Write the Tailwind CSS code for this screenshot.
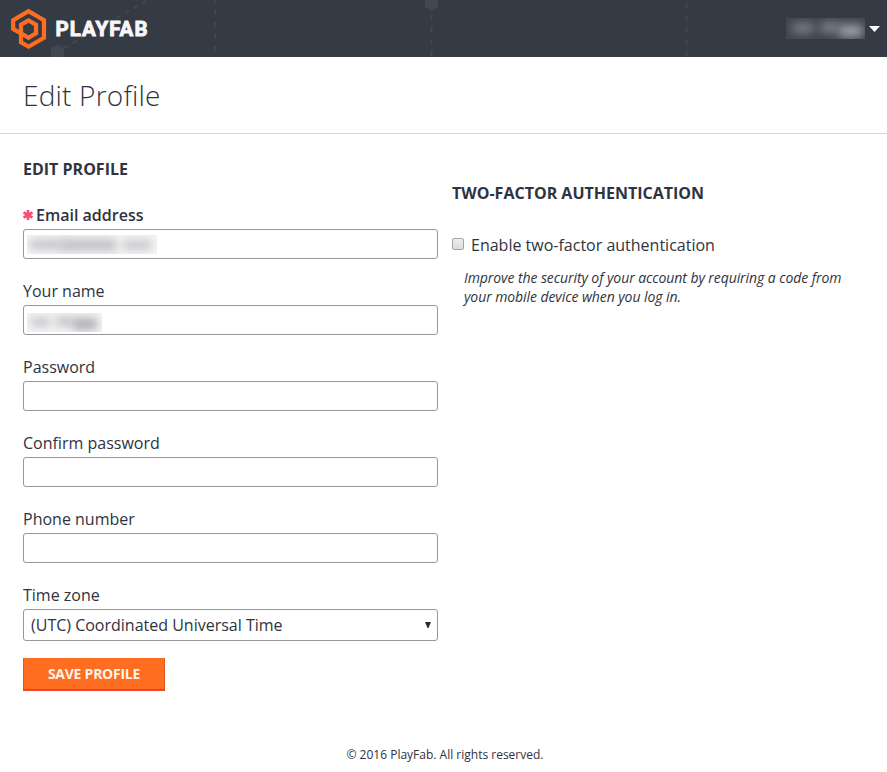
<!DOCTYPE html>
<html lang="en">
<head>
<meta charset="utf-8">
<title>Edit Profile</title>
<script src="https://cdn.jsdelivr.net/npm/@tailwindcss/browser@4"></script>
</head>
<body class="h-[772px] overflow-hidden bg-white font-['Open_Sans',sans-serif] text-base leading-[22px] text-[#2f3340]">
<header class="relative flex h-[57px] items-center justify-between bg-[#343b45]">
  <svg class="absolute inset-0" width="887" height="57" fill="none">
    <g stroke="#414850" stroke-width="2" stroke-dasharray="5 7">
      <path d="M215 0V57" stroke-dashoffset="2"/><path d="M431.500 15V57"/><path d="M686.500 4V57"/>
      <path d="M64 48L150 -1" stroke-dasharray="5 5"/>
    </g>
    <g fill="#414850"><path d="M51 48L57.500 44.500L64 48V57H51Z"/><path d="M425 0H438V7L431.500 10.500L425 7Z"/></g>
  </svg>
  <a class="relative block">
    <svg class="block" width="160" height="57" fill="none">
      <path d="M21 33.300L13.200 29V20.200L28.500 11.300L44 20.200V37.800L28.500 46.700L21 42.400V24.800L28.500 20.500L36 24.800V33.400L28.500 37.700L21 33.300" stroke="#ff6e20" stroke-width="4.200"/>
      <text x="55.500" y="36.300" fill="#f7f7f7" stroke="#f7f7f7" stroke-width=".9" font-family="Roboto, sans-serif" font-weight="700" font-size="20.500" textLength="92">PLAYFAB</text>
    </svg>
  </a>
  <div class="relative flex items-center gap-1 pr-[7px]">
    <div class="relative h-[21px] w-[79px] overflow-hidden bg-[#3f4650]">
      <div class="absolute top-[5px] left-[6px] h-[10px] w-[22px] rounded bg-[#7b7f86] blur-[5px]"></div>
      <div class="absolute top-[4px] left-[34px] h-[11px] w-[20px] rounded bg-[#7b7f86] blur-[5px]"></div>
      <div class="absolute top-[7px] left-[53px] h-[12px] w-[24px] rounded bg-[#a0a3a8] blur-[5px]"></div>
    </div>
    <svg width="11" height="6"><path d="M0 0H11L5.500 6Z" fill="#fff"/></svg>
  </div>
</header>
<div class="flex h-[77px] items-center border-b border-[#d5d6d8] pl-[23px]">
  <h1 class="text-[28px] leading-[38px] font-light tracking-[0.2px]">Edit Profile</h1>
</div>
<main class="flex gap-[14px] pl-[23px]">
  <form class="w-[415px] pt-6">
    <h2 class="font-bold">EDIT PROFILE</h2>
    <div class="mt-6 flex flex-col gap-[21px]">
      <label class="block">
        <span class="flex h-[25px] items-start gap-[3px]">
          <svg class="mt-[6px]" width="10" height="10" stroke="#fb4b75" stroke-width="2.600"><path d="M5 0V10M.5 2.500L9.500 7.500M.5 7.500L9.500 2.500"/></svg>
          <span class="font-semibold">Email address</span></span>
        <span class="block h-[30px] rounded-[3px] border border-[#96979b] pt-[5px] pl-[3px]">
          <span class="relative block h-[19px] w-[130px] overflow-hidden bg-[#f3f3f4]">
            <span class="absolute top-[5px] left-[3px] h-[9px] w-[34px] bg-[#c2c3c6] blur-[4px]"></span>
            <span class="absolute top-[4px] left-[34px] h-[12px] w-[55px] bg-[#c2c3c6] blur-[4px]"></span>
            <span class="absolute top-[6px] left-[96px] h-[8px] w-[28px] bg-[#c2c3c6] blur-[4px]"></span>
          </span>
        </span>
      </label>
      <label class="block">
        <span class="block h-[25px]">Your name</span>
        <span class="block h-[30px] rounded-[3px] border border-[#96979b] pt-[7px] pl-[3px]">
          <span class="relative block h-[19px] w-[75px] overflow-hidden bg-[#f3f3f4]">
            <span class="absolute top-[5px] left-[4px] h-[8px] w-[19px] bg-[#c2c3c6] blur-[4px]"></span>
            <span class="absolute top-[4px] left-[29px] h-[9px] w-[18px] bg-[#c2c3c6] blur-[4px]"></span>
            <span class="absolute top-[5px] left-[46px] h-[12px] w-[24px] bg-[#b0b1b4] blur-[4px]"></span>
          </span>
        </span>
      </label>
      <label class="block"><span class="block h-[25px]">Password</span><input type="password" class="block h-[30px] w-full rounded-[3px] border border-[#96979b]"></label>
      <label class="block"><span class="block h-[25px]">Confirm password</span><input type="password" class="block h-[30px] w-full rounded-[3px] border border-[#96979b]"></label>
      <label class="block"><span class="block h-[25px]">Phone number</span><input type="tel" class="block h-[30px] w-full rounded-[3px] border border-[#96979b]"></label>
      <label class="block">
        <span class="block h-[25px]">Time zone</span>
        <span class="flex h-[32px] items-center justify-between rounded-[3px] border border-[#96979b] pr-[6px] pl-[7px]">
          <span>(UTC) Coordinated Universal Time</span>
          <svg width="6" height="6"><path d="M0 0H6L3.500 6H2.500Z" fill="#2b2c38"/></svg>
        </span>
      </label>
    </div>
    <button type="button" class="mt-[17px] block h-[33px] w-[142px] border-b-2 border-[#e8472b] bg-[#ff6e20] text-[14px] font-bold tracking-[-0.25px] text-[#fdf3ea] shadow-[inset_1px_0_#dd5b22,inset_-1px_0_#dd5b22]">SAVE PROFILE</button>
  </form>
  <section class="w-[410px] pt-12">
    <h2 class="font-bold">TWO-FACTOR AUTHENTICATION</h2>
    <label class="mt-[30px] flex items-start gap-[7px]">
      <span class="mt-[4px] block size-3 rounded-[2px] border border-[#a4a4a4] bg-linear-to-b from-[#ededed] to-[#dcdcdc]"></span>
      <span>Enable two-factor authentication</span>
    </label>
    <p class="mt-[12px] pl-3 text-sm leading-[19px] tracking-[-0.08px] italic">Improve the security of your account by requiring a code from<br>your mobile device when you log in.</p>
  </section>
</main>
<footer class="mt-[54px] pl-[3px] text-center text-xs leading-5">© 2016 PlayFab. All rights reserved.</footer>
</body>
</html>
